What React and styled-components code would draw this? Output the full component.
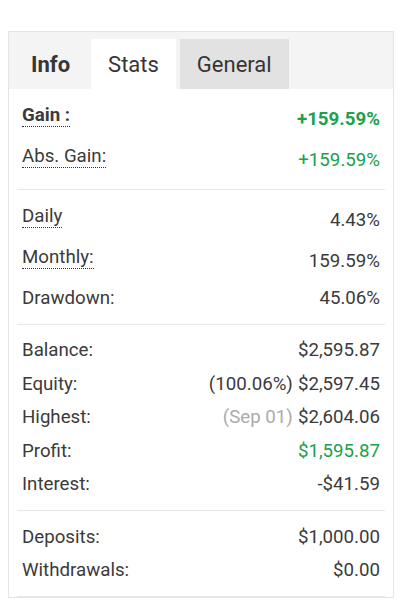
import React from 'react';
import styled, { createGlobalStyle } from 'styled-components';

const GlobalStyle = createGlobalStyle`
  body {
    margin: 0;
    background: #ffffff;
    font-family: Roboto, "Liberation Sans", sans-serif;
    color: #3b3b3b;
  }
`;

const Page = styled.div`
  padding: 31px 0 0 8px;
`;

const Card = styled.section`
  width: 386px;
  box-sizing: border-box;
  border: 1px solid #e4e4e4;
  background: #fff;
`;

const TabBar = styled.nav`
  display: flex;
  gap: 4px;
  padding: 7px 0 0 5px;
  background: #f4f4f4;
`;

const Tab = styled.div`
  height: 50px;
  display: flex;
  align-items: center;
  padding: 0 17px;
  font-size: 22px;
  color: #363636;
  font-weight: ${p => (p.$bold ? 700 : 400)};
  background: ${p => (p.$active ? '#ffffff' : p.$hover ? '#e2e2e2' : 'transparent')};
`;

const Section = styled.div`
  margin: 0 8px;
  padding: 9px 5px;
  border-bottom: 1px solid #e8e8e8;
`;

const Row = styled.div`
  display: flex;
  justify-content: space-between;
  align-items: center;
  height: ${p => (p.$dotted ? '41px' : '33.5px')};
  font-size: 18.7px;
  line-height: 22px;
`;

const Label = styled.span`
  font-weight: ${p => (p.$bold ? 700 : 400)};
  ${p =>
    p.$dotted &&
    `
    border-bottom: 1px dotted #333;
    margin-bottom: 7px;
  `}
`;

const Value = styled.span`
  font-weight: ${p => (p.$bold ? 700 : 400)};
  color: ${p => (p.$green ? '#20a04a' : '#3b3b3b')};
`;

const Note = styled.span`
  color: ${p => (p.$muted ? '#ababab' : '#3b3b3b')};
  margin-right: 5px;
`;

const sections = [
  [
    { label: 'Gain :', value: '+159.59%', dotted: true, bold: true, green: true },
    { label: 'Abs. Gain:', value: '+159.59%', dotted: true, green: true },
  ],
  [
    { label: 'Daily', value: '4.43%', dotted: true },
    { label: 'Monthly:', value: '159.59%', dotted: true },
    { label: 'Drawdown:', value: '45.06%' },
  ],
  [
    { label: 'Balance:', value: '$2,595.87' },
    { label: 'Equity:', value: '$2,597.45', note: '(100.06%)' },
    { label: 'Highest:', value: '$2,604.06', note: '(Sep 01)', muted: true },
    { label: 'Profit:', value: '$1,595.87', green: true },
    { label: 'Interest:', value: '-$41.59' },
  ],
  [
    { label: 'Deposits:', value: '$1,000.00' },
    { label: 'Withdrawals:', value: '$0.00' },
  ],
];

export default function App() {
  return (
    <Page>
      <GlobalStyle />
      <Card>
        <TabBar>
          <Tab $bold>Info</Tab>
          <Tab $active>Stats</Tab>
          <Tab $hover>General</Tab>
        </TabBar>
        {sections.map((rows, i) => (
          <Section key={i}>
            {rows.map(r => (
              <Row key={r.label} $dotted={r.dotted}>
                <Label $dotted={r.dotted} $bold={r.bold}>{r.label}</Label>
                <Value $green={r.green} $bold={r.bold}>
                  {r.note && <Note $muted={r.muted}>{r.note}</Note>}
                  {r.value}
                </Value>
              </Row>
            ))}
          </Section>
        ))}
      </Card>
    </Page>
  );
}
